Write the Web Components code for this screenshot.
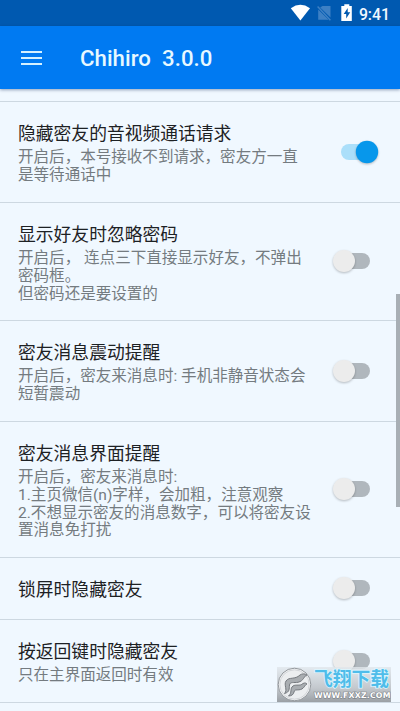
<!DOCTYPE html>
<html lang="zh-CN">
<head>
<meta charset="utf-8">
<title>Chihiro</title>
<style>
html,body{margin:0;height:100%;overflow:hidden}
body{font-family:Roboto,"Noto Sans CJK SC",sans-serif;background:#f0f8ff}
</style>
</head>
<body>
<settings-screen></settings-screen>
<script>
function define(name, html){
  customElements.define(name, class extends HTMLElement{
    constructor(){
      super();
      const t=document.createElement('template');
      t.innerHTML=html;
      this.attachShadow({mode:'open'}).appendChild(t.content.cloneNode(true));
    }
  });
}

define('status-bar', `
<style>
:host{display:block;height:26px;background:#0059b0;color:#f1f8ff}
svg{display:block;width:400px;height:26px}
.bar{display:grid}
.bar>*{grid-area:1/1}
.time{justify-self:end;padding-right:10px;font-size:15.800px;font-weight:500;line-height:29px;height:26px}
</style>
<div class="bar">
<svg viewBox="0 0 400 26">
  <path d="M290.8 8.2Q300.4 1.4 310 8.2L300.4 20.6Z" fill="#fff"/>
  <path d="M322.5 6h8v11.6L320.200 7.600zM318.200 9.600v10.200h10.400z" fill="#3d80c4"/>
  <path d="M317.600 6.600L330.400 20.200" stroke="#3d80c4" stroke-width="1.500"/>
  <path d="M344.300 4.300h5v1.600h2.500V21h-10.500V5.900h3z" fill="#fff"/>
  <path d="M347.700 7.900l-4 6h2.500v4.600l4-6.200h-2.500z" fill="#0059b0"/>
</svg>
<div class="time">9:41</div>
</div>`);

define('app-bar', `
<style>
:host{display:flex;align-items:center;height:63px;background:#007af2;color:#e7f8ff;padding-left:21px;box-shadow:0 1px 3px rgba(0,30,80,.4);position:relative;box-sizing:border-box}
svg{width:21px;height:16px;margin-right:38px}
.t{font-size:22.200px;font-weight:500;white-space:pre;letter-spacing:.05px}
</style>
<svg viewBox="0 0 21 16"><path d="M0 2h21M0 8h21M0 14h21" stroke="#d5f1ff" stroke-width="2.200"/></svg>
<div class="t"><slot></slot></div>`);

define('toggle-switch', `
<style>
:host{display:block;width:48px;height:28px;flex:none}
svg{display:block;overflow:visible}
.on{display:none}
:host([on]) .on{display:block}
:host([on]) .off{display:none}
.k{filter:drop-shadow(0 1px .8px rgba(0,0,0,.25))}
</style>
<svg class="off" width="48" height="28" viewBox="0 0 48 28"><rect x="9" y="6" width="31" height="16" rx="8" fill="#b0b7bd"/><circle class="k" cx="14" cy="14" r="11" fill="#ececec"/></svg>
<svg class="on" width="48" height="28" viewBox="0 0 48 28"><rect x="11" y="6" width="30" height="16" rx="8" fill="#abdffa"/><circle class="k" cx="37" cy="14" r="11.200" fill="#0797eb"/></svg>`);

define('setting-row', `
<style>
:host{display:flex;align-items:center;box-sizing:border-box;height:var(--h);padding-left:18px;border-bottom:1.500px solid #cdd8e1}
.txt{flex:1;min-width:0;align-self:flex-start;padding-top:21.300px}
.title{font-size:17.800px;line-height:21px;color:#1d2124;white-space:nowrap}
.sub{margin-top:5px;font-size:15.550px;line-height:17.800px;color:#747b80;white-space:pre}
</style>
<div class="txt"><div class="title"><slot name="title"></slot></div><div class="sub"><slot></slot></div></div>
<slot name="toggle"></slot>`);

define('site-mark', `
<style>
:host{display:flex;width:114px;height:35px;background:linear-gradient(rgba(225,231,236,.8),rgba(190,195,200,.9) 60%,rgba(150,155,160,.95));align-items:center}
svg{width:35px;height:35px;flex:none}
.n{display:flex;flex-direction:column;white-space:nowrap;margin-left:2px}
.a{font-size:18.800px;line-height:22px;font-weight:700;color:#4fbdea;-webkit-text-stroke:1.500px #dcf6ff;paint-order:stroke fill}
.b{font:bold 7.800px/10px "DejaVu Sans",sans-serif;color:#fff;letter-spacing:.2px;-webkit-text-stroke:1px #777c82;paint-order:stroke fill}
</style>
<svg viewBox="0 0 35 35">
<circle cx="17.500" cy="17.500" r="16.300" fill="#f5f6f7" stroke="#92979c" stroke-width="1"/>
<circle cx="17.500" cy="17.500" r="14.700" fill="#eceef0" stroke="#c5c9cd" stroke-width=".7"/>
<path d="M7.500 26.500C11 23 6.500 18 9 14C12 9.500 18 13 23 8C25 6.500 28 6.500 30 8C27 8.500 27 14 21 15.300C17 16 13 14.500 12.500 18C12 22 13 25 7.500 26.500Z" fill="#a9adb1" stroke="#75797e" stroke-width="1"/>
<path d="M11.500 29C15.500 26 12.500 21.500 16 19C19 17 23 19.500 26 16.500C28 15.500 29 16 30 17C27.500 18 27 22.500 22 22.800C19 23 17.500 22.500 17 25C16.500 27.500 14.500 29 11.500 29Z" fill="#a9adb1" stroke="#75797e" stroke-width="1"/>
</svg>
<div class="n"><div class="a">飞翔下载</div><div class="b">WWW.FXXZ.COM</div></div>`);

define('settings-screen', `
<style>
:host{display:block;position:relative;width:400px;height:711px;background:#f0f8ff;overflow:hidden}
.list{display:flex;flex-direction:column}
.list::before{content:"";box-sizing:border-box;height:12.700px;border-bottom:1px solid #cdd8e1}
.scroll{position:absolute;right:0;top:294px;width:4px;height:213px;background:#a8afb5}
site-mark{position:absolute;left:277px;top:667px}
toggle-switch{margin-right:22px}
</style>
<status-bar></status-bar>
<app-bar>Chihiro  3.0.0</app-bar>
<div class="list">
<setting-row style="--h:101px"><span slot="title">隐藏密友的音视频通话请求</span>开启后，本号接收不到请求，密友方一直
是等待通话中<toggle-switch on slot="toggle"></toggle-switch></setting-row>
<setting-row style="--h:118px"><span slot="title">显示好友时忽略密码</span>开启后， 连点三下直接显示好友，不弹出
密码框。
但密码还是要设置的<toggle-switch slot="toggle"></toggle-switch></setting-row>
<setting-row style="--h:101px"><span slot="title">密友消息震动提醒</span>开启后，密友来消息时: 手机非静音状态会
短暂震动<toggle-switch slot="toggle"></toggle-switch></setting-row>
<setting-row style="--h:136px"><span slot="title">密友消息界面提醒</span>开启后，密友来消息时:
1.主页微信(n)字样，会加粗，注意观察
2.不想显示密友的消息数字，可以将密友设
置消息免打扰<toggle-switch slot="toggle"></toggle-switch></setting-row>
<setting-row style="--h:62px"><span slot="title">锁屏时隐藏密友</span><toggle-switch slot="toggle"></toggle-switch></setting-row>
<setting-row style="--h:83px"><span slot="title">按返回键时隐藏密友</span>只在主界面返回时有效<toggle-switch slot="toggle"></toggle-switch></setting-row>
</div>
<div class="scroll"></div>
<site-mark></site-mark>`);
</script>
</body>
</html>
